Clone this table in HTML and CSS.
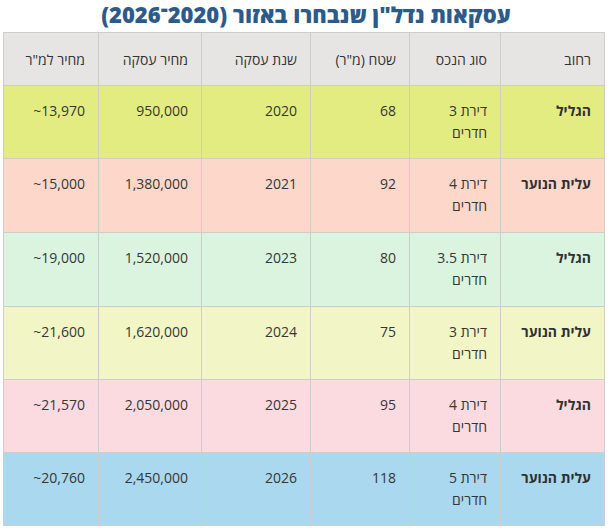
FILE: index.html
```html
<!DOCTYPE html>
<html lang="he" dir="rtl">
<head>
<meta charset="utf-8">
<title>עסקאות נדל"ן</title>
<link rel="stylesheet" href="styles.css">
</head>
<body>
<h1 class="title">עסקאות נדל"ן שנבחרו באזור (2020־2026)</h1>
<table class="deals">
  <colgroup>
    <col class="c-street">
    <col class="c-type">
    <col class="c-area">
    <col class="c-year">
    <col class="c-price">
    <col class="c-sqm">
  </colgroup>
  <thead>
    <tr>
      <th>רחוב</th>
      <th>סוג הנכס</th>
      <th>שטח (מ"ר)</th>
      <th>שנת עסקה</th>
      <th>מחיר עסקה</th>
      <th>מחיר למ"ר</th>
    </tr>
  </thead>
  <tbody>
    <tr class="r1">
      <td class="street">הגליל</td>
      <td>דירת 3<br>חדרים</td>
      <td>68</td>
      <td>2020</td>
      <td>950,000</td>
      <td><span dir="ltr">~13,970</span></td>
    </tr>
    <tr class="r2 tall">
      <td class="street">עלית הנוער</td>
      <td>דירת 4<br>חדרים</td>
      <td>92</td>
      <td>2021</td>
      <td>1,380,000</td>
      <td><span dir="ltr">~15,000</span></td>
    </tr>
    <tr class="r3 tall">
      <td class="street">הגליל</td>
      <td>דירת 3.5<br>חדרים</td>
      <td>80</td>
      <td>2023</td>
      <td>1,520,000</td>
      <td><span dir="ltr">~19,000</span></td>
    </tr>
    <tr class="r4">
      <td class="street">עלית הנוער</td>
      <td>דירת 3<br>חדרים</td>
      <td>75</td>
      <td>2024</td>
      <td>1,620,000</td>
      <td><span dir="ltr">~21,600</span></td>
    </tr>
    <tr class="r5">
      <td class="street">הגליל</td>
      <td>דירת 4<br>חדרים</td>
      <td>95</td>
      <td>2025</td>
      <td>2,050,000</td>
      <td><span dir="ltr">~21,570</span></td>
    </tr>
    <tr class="r6">
      <td class="street">עלית הנוער</td>
      <td>דירת 5<br>חדרים</td>
      <td>118</td>
      <td>2026</td>
      <td>2,450,000</td>
      <td><span dir="ltr">~20,760</span></td>
    </tr>
  </tbody>
</table>
</body>
</html>
```

FILE: styles.css
```css
html, body {
  margin: 0;
  padding: 0;
  background: #ffffff;
}

body {
  font-family: "Open Sans", "Liberation Sans", "DejaVu Sans", sans-serif;
  color: #363636;
  width: 612px;
}

.title {
  margin: 0;
  height: 32px;
  line-height: 29px;
  font-size: 22px;
  font-weight: 800;
  color: #2c5b89;
  text-align: center;
}

.deals {
  margin-right: 7px;
  width: 601px;
  border-collapse: collapse;
  table-layout: fixed;
  font-size: 14px;
}

.c-street { width: 104px; }
.c-type { width: 91px; }
.c-area { width: 99px; }
.c-year { width: 109px; }
.c-price { width: 103px; }
.c-sqm { width: 95px; }

.deals th,
.deals td {
  border: 1px solid #cfcdcb;
  text-align: right;
  padding: 0 13px 0 6px;
}

.deals th {
  height: 52px;
  background: #e7e5e4;
  font-weight: 400;
  color: #333333;
  vertical-align: middle;
}

.deals td {
  vertical-align: top;
  padding-top: 14px;
  line-height: 22px;
  height: 58px;
}

.deals .tall td {
  height: 59px;
}

.deals td.street {
  font-weight: 700;
  color: #303030;
}

.r1 td { background: #e3ec80; }
.r2 td { background: #fdd8ca; }
.r3 td { background: #dbf4df; }
.r4 td { background: #f2f5c6; }
.r5 td { background: #fbdbdf; }
.r6 td { background: #a9d8ef; }
```
